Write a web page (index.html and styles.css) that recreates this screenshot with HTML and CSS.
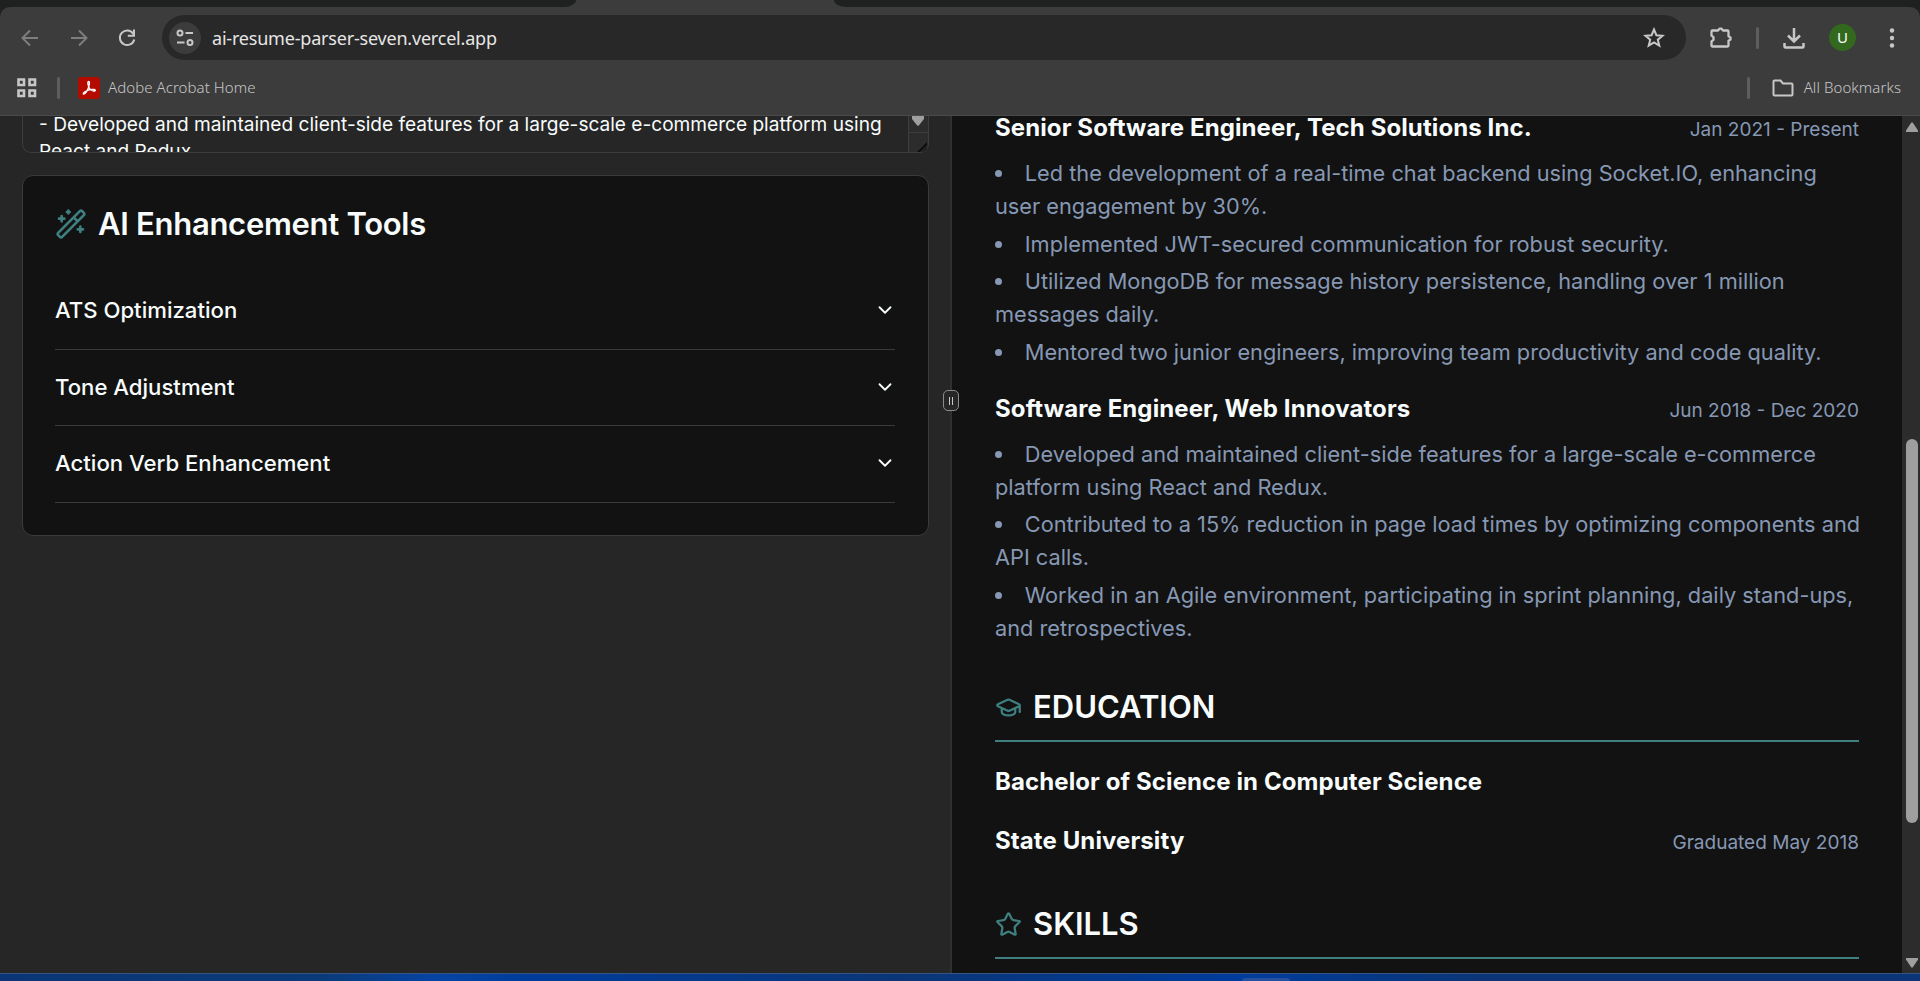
FILE: index.html
```html
<!DOCTYPE html>
<html lang="en">
<head>
<meta charset="utf-8">
<title>AI Resume Parser</title>
<link rel="stylesheet" href="styles.css">
</head>
<body>
<div class="browser">
  <div class="tabstrip"><div class="tabs-left"></div><div class="tabs-right"></div></div>
  <div class="toolbar">
    <div class="nav">
      <svg class="dim" width="20" height="20" viewBox="0 0 20 20"><path d="M18 10H3M10 2.5 2.5 10l7.500 7.500"/></svg>
      <svg class="dim" width="20" height="20" viewBox="0 0 20 20"><path d="M2 10h15M10 2.500l7.500 7.500-7.500 7.500"/></svg>
      <svg class="lit" width="20" height="20" viewBox="0 0 20 20"><path d="M16.500 6A7.300 7.300 0 1 0 17.300 11.500M17 1.500v6.200h-6.200"/></svg>
    </div>
    <div class="omnibox">
      <div class="site-info"><svg class="lit" width="20" height="20" viewBox="0 0 20 20"><circle cx="5" cy="5" r="2.500"/><path d="M10.500 5H18M2 14.500h7.500"/><circle cx="15" cy="14.500" r="2.500"/></svg></div>
      <span class="url">ai-resume-parser-seven.vercel.app</span>
      <svg class="lit" width="22" height="22" viewBox="0 0 22 22"><path d="m11 2.500 2.400 5.700 6.100.5-4.700 4 1.500 6L11 15.500l-5.300 3.200 1.500-6-4.700-4 6.100-.5z"/></svg>
    </div>
    <div class="actions">
      <svg class="lit puzzle" width="24" height="24" viewBox="0 0 24 24"><path d="M3.500 4.500H9l1.500-1.800h2L14 4.500h4.500a1 1 0 0 1 1 1v4.800l2 1.200v2l-2 1.200v4.800a1 1 0 0 1-1 1h-15a1 1 0 0 1-1-1v-4.200l2-1.500v-2.600l-2-1.500V5.500a1 1 0 0 1 1-1z"/></svg>
      <i class="sep"></i>
      <svg class="lit thick" width="24" height="24" viewBox="0 0 24 24"><path d="M12 2v13M6 9.500l6 6 6-6M2.500 17v3.500a1 1 0 0 0 1 1h17a1 1 0 0 0 1-1V17"/></svg>
      <div class="avatar">U</div>
      <svg class="dots" width="6" height="22" viewBox="0 0 6 22"><circle cx="3" cy="3.500" r="2.200"/><circle cx="3" cy="11" r="2.200"/><circle cx="3" cy="18.500" r="2.200"/></svg>
    </div>
  </div>
  <div class="bookmarks">
    <svg class="apps" width="20" height="20" viewBox="0 0 20 20"><path d="M1.500 1.500h5.500v5.500H1.500zM12.500 1.500H18v5.500h-5.500zM1.500 12.500h5.500V18H1.500zM12.500 12.500H18V18h-5.500z"/></svg>
    <i class="sep"></i>
    <svg class="acrobat" width="22" height="22" viewBox="0 0 22 22"><rect width="22" height="22" rx="3"/><path d="M10.300 4.600c1.500-.8 1.400 2 .4 5.200-.9 2.900-3 6.700-4.600 7.200-1.400.3-1.100-1.300 1.200-2.500 2.600-1.400 6.600-2.400 8.800-2 2 .5 1.400 1.800-.4 1.500-2.200-.4-4.600-2.900-5.400-5.400-.5-1.700-.8-3.400 0-4z"/></svg>
    <span class="bm">Adobe Acrobat Home</span>
    <i class="sep right"></i>
    <svg class="lit folder" width="22" height="18" viewBox="0 0 22 18"><path d="M1.500 2.500a1 1 0 0 1 1-1h6l2.500 3h8.500a1 1 0 0 1 1 1v10a1 1 0 0 1-1 1h-17a1 1 0 0 1-1-1z"/></svg>
    <span class="bm">All Bookmarks</span>
  </div>
</div>
<div class="app">
  <section class="left">
    <div class="textarea">
      <div class="source">- Developed and maintained client-side features for a large-scale e-commerce platform using<br>React and Redux.</div>
      <div class="ta-scroll">
        <div class="ta-down"><svg width="12" height="10" viewBox="0 0 12 10"><path d="M0 0h12v3L7 9.300q-1 1-2 0L0 3z"/></svg></div>
        <div class="ta-corner"><svg width="10" height="10" viewBox="0 0 10 10"><path d="M0 10 10 0v3L3 10zM5 10l5-5v3l-2 2z"/></svg></div>
      </div>
    </div>
    <div class="card">
      <h2 class="card-title"><svg class="teal" width="32" height="32" viewBox="0 0 24 24"><path d="m21.640 3.640-1.280-1.280a1.210 1.210 0 0 0-1.720 0L2.360 18.640a1.210 1.210 0 0 0 0 1.720l1.280 1.280a1.200 1.200 0 0 0 1.720 0L21.640 5.360a1.200 1.200 0 0 0 0-1.720M14 7l3 3M5 6v4M19 14v4M10 2v2M7 8H3M21 16h-4M11 3H9"/></svg><span>AI Enhancement Tools</span></h2>
      <div class="row"><span>ATS Optimization</span><svg width="22" height="22" viewBox="0 0 24 24"><path d="m6 9 6 6 6-6"/></svg></div>
      <div class="row"><span>Tone Adjustment</span><svg width="22" height="22" viewBox="0 0 24 24"><path d="m6 9 6 6 6-6"/></svg></div>
      <div class="row"><span>Action Verb Enhancement</span><svg width="22" height="22" viewBox="0 0 24 24"><path d="m6 9 6 6 6-6"/></svg></div>
    </div>
  </section>
  <div class="divider"><div class="handle"><i></i><i></i></div></div>
  <section class="resume">
    <div class="job"><h3>Senior Software Engineer, Tech Solutions Inc.</h3><span class="date">Jan 2021 - Present</span></div>
    <ul>
      <li>Led the development of a real-time chat backend using Socket.IO, enhancing<br>user engagement by 30%.</li>
      <li>Implemented JWT-secured communication for robust security.</li>
      <li>Utilized MongoDB for message history persistence, handling over 1 million<br>messages daily.</li>
      <li>Mentored two junior engineers, improving team productivity and code quality.</li>
    </ul>
    <div class="job"><h3>Software Engineer, Web Innovators</h3><span class="date">Jun 2018 - Dec 2020</span></div>
    <ul>
      <li>Developed and maintained client-side features for a large-scale e-commerce<br>platform using React and Redux.</li>
      <li>Contributed to a 15% reduction in page load times by optimizing components and<br>API calls.</li>
      <li>Worked in an Agile environment, participating in sprint planning, daily stand-ups,<br>and retrospectives.</li>
    </ul>
    <h2 class="section"><svg class="teal" width="27" height="27" viewBox="0 0 24 24"><path d="M21.420 10.922a1 1 0 0 0-.019-1.838L12.830 5.180a2 2 0 0 0-1.660 0L2.600 9.080a1 1 0 0 0 0 1.832l8.570 3.908a2 2 0 0 0 1.660 0zM22 10v6M6 12.500V16a6 3 0 0 0 12 0v-3.500"/></svg><span>EDUCATION</span></h2>
    <h3 class="degree">Bachelor of Science in Computer Science</h3>
    <div class="job school"><h3>State University</h3><span class="date">Graduated May 2018</span></div>
    <h2 class="section"><svg class="teal" width="27" height="27" viewBox="0 0 24 24"><path d="M11.525 2.295a.53.53 0 0 1 .95 0l2.310 4.679a2.123 2.123 0 0 0 1.595 1.160l5.166.756a.53.53 0 0 1 .294.904l-3.736 3.638a2.123 2.123 0 0 0-.611 1.878l.882 5.140a.53.53 0 0 1-.771.560l-4.618-2.428a2.122 2.122 0 0 0-1.973 0L6.396 21.010a.53.53 0 0 1-.770-.560l.881-5.139a2.122 2.122 0 0 0-.611-1.879L2.160 9.795a.53.53 0 0 1 .294-.906l5.165-.755a2.122 2.122 0 0 0 1.597-1.160z"/></svg><span>SKILLS</span></h2>
  </section>
  <div class="scrollbar">
    <svg width="12" height="10" viewBox="0 0 12 10"><path d="M0 10V8.500L5 1q1-1.500 2 0l5 7.500V10z"/></svg>
    <div class="thumb"></div>
    <svg width="12" height="10" viewBox="0 0 12 10"><path d="M0 0v1.500L5 9q1 1.500 2 0l5-7.500V0z"/></svg>
  </div>
</div>
<div class="taskbar"><div class="task"></div></div>
</body>
</html>
```
FILE: styles.css
```css
* { box-sizing: border-box; }
body { margin: 0; width: 1920px; height: 981px; overflow: hidden; display: flex; flex-direction: column; background: #262626; font-family: Inter, "Liberation Sans", sans-serif; color: #f8fcfc; }
h2, h3, ul { margin: 0; padding: 0; }
svg { display: block; flex: none; fill: none; stroke: currentColor; stroke-width: 2; }

/* Browser chrome */
.browser { height: 116px; flex: none; background: #1f2120; font-family: "Noto Sans", "Open Sans", sans-serif; border-bottom: 1px solid #4a4a4a; }
.tabstrip { height: 7px; display: flex; justify-content: space-between; background: #3c3c3c; }
.tabs-left { width: 576px; background: #1f2120; border-bottom-right-radius: 14px 8px; }
.tabs-right { width: 1086px; background: #1f2120; border-bottom-left-radius: 14px 8px; }
.toolbar { height: 53px; padding: 8px 23px 0 20px; display: flex; background: #3c3c3c; border-radius: 10px 10px 0 0; }
.nav { width: 142px; display: flex; gap: 28.500px; align-items: center; }
.dim { color: #7d7d7d; }
.lit { color: #c7c7c7; }
.omnibox { width: 1524px; height: 45px; border-radius: 23px; background: #282828; display: flex; align-items: center; padding: 0 21px 0 7px; }
.site-info { width: 32px; height: 32px; border-radius: 50%; background: #3c3c3c; display: flex; align-items: center; justify-content: center; margin-right: 11px; }
.url { flex: 1; font-size: 18px; letter-spacing: -0.200px; color: #e6e6e6; white-space: nowrap; }
.actions { flex: 1; display: flex; align-items: center; padding-left: 23px; }
.puzzle { stroke-width: 2.300; stroke-linejoin: round; }
.sep { width: 3px; height: 22px; border-radius: 2px; background: #5e5e5e; }
.actions .sep { margin: 0 23px; }
.thick { stroke-width: 2.500; }
.avatar { width: 27px; height: 27px; border-radius: 50%; background: #33691e; margin: 0 33px 0 23px; font-size: 15px; line-height: 27px; text-align: center; color: #fff; }
.dots { fill: #c7c7c7; stroke: none; }
.bookmarks { height: 55px; background: #3c3c3c; display: flex; align-items: center; padding: 0 19px 0 17px; }
.apps { color: #c7c7c7; stroke-width: 2.600; }
.bookmarks .sep { margin: 0 18px 0 20px; }
.bookmarks .sep.right { margin: 0 22px 0 auto; }
.acrobat { fill: #b30b00; stroke: none; margin-right: 8px; }
.acrobat path { stroke: #fff; stroke-width: 1.300; fill: none; }
.bm { font-size: 15px; letter-spacing: 0.070px; color: #c7c7c7; font-weight: 300; white-space: nowrap; padding-bottom: 2px; }
.folder { margin-right: 10px; }

/* Editor pane */
.app { height: 857px; flex: none; display: flex; overflow: hidden; }
.left { width: 950px; padding: 0 21px 0 22px; }
.textarea { height: 37px; display: flex; border: 1px solid #3d3d3d; border-top: 0; border-radius: 0 0 9px 9px; overflow: hidden; }
.source { flex: 1; margin-top: -4px; padding-left: 16px; font-size: 19.080px; line-height: 26.500px; white-space: nowrap; }
.ta-scroll { width: 20px; background: #2c2c2c; border-left: 1px solid #3d3d3d; }
.ta-down { height: 17px; padding-left: 3px; border-bottom: 1px solid #3d3d3d; }
.ta-down svg { fill: #9f9f9f; stroke: none; }
.ta-corner { padding: 9px 0 0 8px; }
.ta-corner svg { fill: #0c0c0c; stroke: none; }
.card { height: 361px; margin-top: 22px; border: 1px solid #3a3a3a; border-radius: 11px; background: #121212; padding: 32px 33px 0 32px; }
.card-title { height: 65px; display: flex; align-items: flex-start; gap: 11px; font-size: 31px; letter-spacing: -0.290px; line-height: 32px; font-weight: 600; }
.teal { color: #3f7f80; stroke-linecap: round; stroke-linejoin: round; }
.row { height: 76.500px; padding-bottom: 1px; border-bottom: 1px solid #3a3a3a; display: flex; align-items: center; justify-content: space-between; font-size: 22.150px; font-weight: 500; }
.row svg { margin-right: -1px; stroke-linecap: round; stroke-linejoin: round; }
.divider { width: 2px; background: #303030; display: flex; align-items: center; justify-content: center; }
.handle { position: relative; top: -144px; flex: none; width: 16px; height: 21px; border: 1px solid #8b8b8b; border-radius: 5px; background: #262626; display: flex; align-items: center; justify-content: center; gap: 2px; }
.handle i { width: 1px; height: 8px; background: #c8c8c8; }

/* Resume preview */
.resume { width: 950px; background: #121212; padding: 0 43px; }
.job { display: flex; justify-content: space-between; align-items: baseline; height: 33px; line-height: 31px; }
.job:first-child { margin-top: -4px; }
.resume h3 { font-size: 24px; letter-spacing: 0.100px; line-height: 31px; font-weight: 700; }
.date { font-size: 19.050px; color: #8798b4; }
.resume ul { list-style: disc inside; margin: 12px 0 23.500px; font-size: 21.750px; line-height: 33px; color: #8798b4; white-space: nowrap; }
.resume li + li { margin-top: 4.700px; }
.resume .section { height: 55px; margin-top: 42.500px; border-bottom: 2px solid #3f7f80; display: flex; align-items: flex-start; gap: 11px; font-size: 31px; line-height: 40px; font-weight: 600; }
.section svg { margin-top: 7px; }
.resume .degree { margin-top: 23.500px; }
.school { margin: 28.500px 0 46px; }
.scrollbar { width: 18px; background: #2c2c2c; display: flex; flex-direction: column; align-items: center; justify-content: space-between; padding: 6px 0 5px 2px; }
.scrollbar svg { fill: #9f9f9f; stroke: none; }
.thumb { width: 12px; height: 384px; margin-top: 172px; border-radius: 6px; background: #9f9f9f; }

/* Desktop taskbar edge */
.taskbar { height: 8px; flex: none; border-top: 1px solid #35547f; background: linear-gradient(90deg, #0b3576 0, #0b3a78 320px, #0644a4 440px, #003c9c 520px, #0b3576 900px, #003c9c 1240px, #0b3576 1480px, #0b3576 100%); padding: 4px 0 0 1242px; }
.task { width: 48px; height: 3px; border-radius: 4px 4px 0 0; background: #23519f; }
```
